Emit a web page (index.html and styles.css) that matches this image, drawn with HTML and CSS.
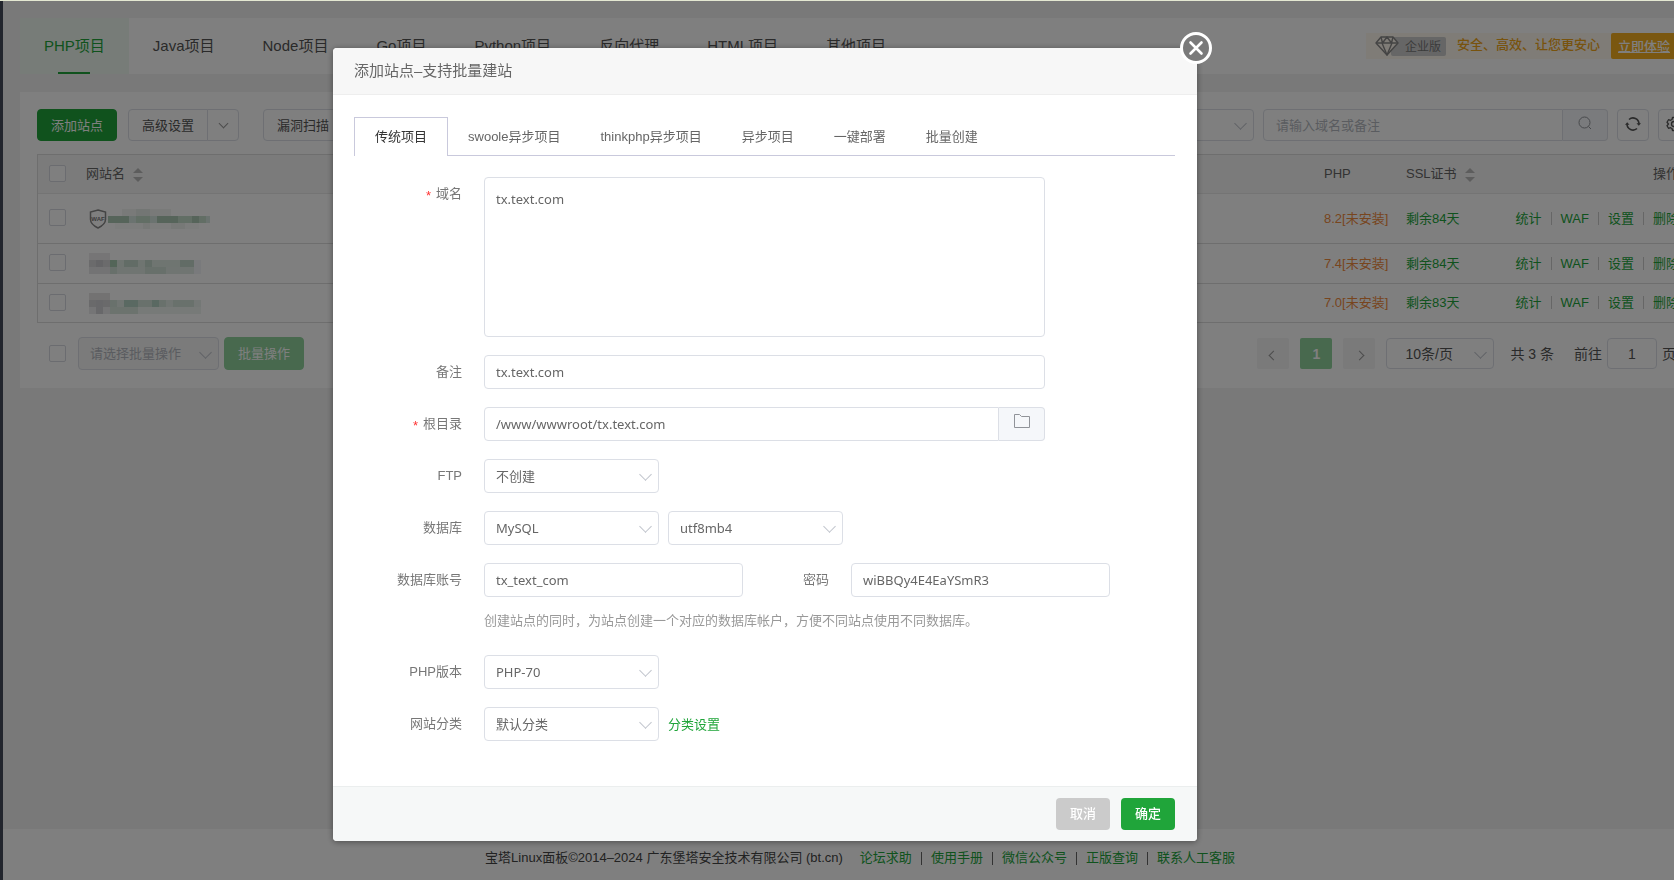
FILE: index.html
```html
<!DOCTYPE html>
<html lang="zh-CN">
<head>
<meta charset="utf-8">
<title>添加站点</title>
<link rel="stylesheet" href="styles.css">
</head>
<body>
<div class="app">
  <aside class="side"></aside>
  <div class="content">
    <main class="main">
      <nav class="card project-nav">
        <a class="project is-active" href="#">PHP项目</a>
        <a class="project" href="#">Java项目</a>
        <a class="project" href="#">Node项目</a>
        <a class="project" href="#">Go项目</a>
        <a class="project" href="#">Python项目</a>
        <a class="project" href="#">反向代理</a>
        <a class="project" href="#">HTML项目</a>
        <a class="project" href="#">其他项目</a>
        <div class="promo">
          <svg class="promo-gem" width="24" height="20" viewBox="0 0 24 20" fill="none" stroke="currentColor" stroke-width="1.4" stroke-linejoin="round"><path d="M6 1h12l5 6-11 12L1 7z" fill="#fff8ee"/><path d="M1 7h22M7 7l5 12 5-12M6 1l1.500 6L12 1l4.500 6L18 1"/></svg>
          <span class="promo-badge">企业版</span>
          <span class="promo-text">安全、高效、让您更安心</span>
          <button class="promo-btn" type="button">立即体验</button>
        </div>
      </nav>

      <section class="card sites">
        <div class="toolbar">
          <button class="btn btn-primary" type="button">添加站点</button>
          <div class="split">
            <button class="btn split-main" type="button">高级设置</button>
            <button class="btn split-more" type="button" aria-label="更多"><i class="chev"></i></button>
          </div>
          <button class="btn scan" type="button">漏洞扫描</button>
          <div class="toolbar-right">
            <div class="select filter"><select aria-label="分类"><option></option></select></div>
            <div class="search">
              <input type="text" placeholder="请输入域名或备注" aria-label="搜索">
              <button type="button" aria-label="搜索"><svg width="14" height="14" viewBox="0 0 14 14" fill="none" stroke="currentColor"><circle cx="6.500" cy="6.500" r="5.500"/><path d="M10.500 10.500l2.500 2.500"/></svg></button>
            </div>
            <button class="btn icon-btn" type="button" aria-label="刷新"><svg width="16" height="16" viewBox="0 0 16 16" fill="none" stroke="currentColor" stroke-width="1.600"><path d="M4 3.500A6 6 0 0 1 14 8M12 12.500A6 6 0 0 1 2 8"/><path d="M11.500 7.200h4.500l-2.200 2.600zM0 8.800h4.500L2.200 6.200z" fill="currentColor" stroke="none"/></svg></button>
            <button class="btn icon-btn" type="button" aria-label="设置"><svg width="16" height="16" viewBox="0 0 16 16" fill="none" stroke="currentColor" stroke-width="1.300"><path d="M6.500 1.500h3l.500 2 1.500.800 2-.600 1.500 2.600-1.500 1.700 1.500 1.700-1.500 2.600-2-.600-1.500.800-.500 2h-3l-.500-2-1.500-.800-2 .600L1 9.700 2.500 8 1 6.300l1.500-2.600 2 .600L6 3.500z" stroke-linejoin="round"/><circle cx="8" cy="8" r="2.500"/></svg></button>
          </div>
        </div>

        <table class="table">
          <colgroup><col class="c-check"><col><col class="c-php"><col class="c-ssl"><col class="c-ops"></colgroup>
          <thead>
            <tr>
              <th class="check"><input type="checkbox" aria-label="全选"></th>
              <th>网站名<i class="sort"></i></th>
              <th>PHP</th>
              <th>SSL证书<i class="sort"></i></th>
              <th class="ops">操作</th>
            </tr>
          </thead>
          <tbody>
            <tr class="row-tall">
              <td class="check"><input type="checkbox" aria-label="选择站点 1"></td>
              <td><div class="site">
                <svg width="18" height="20" viewBox="0 0 18 20"><path d="M9 1l7.500 2v7.500c0 4-3.500 6.500-7.500 8.500-4-2-7.500-4.500-7.500-8.500V3z" fill="none" stroke="#888" stroke-width="1.500"/><text x="9" y="11.500" font-size="6" font-weight="700" text-anchor="middle" fill="#777" font-family="Liberation Sans, sans-serif">WAF</text></svg>
                <svg class="mosaic" width="102" height="20" viewBox="0 0 102 20"><path d="M14 0h49v7H14z" fill="#f2f4f2"/><path d="M28 0h14v7H28z" fill="#e6ece8"/><path d="M0 7h102v7H0z" fill="#c4dccb"/><path d="M0 7h21v7H0zM49 7h21v7H49zM84 7h7v7h-7z" fill="#adc9b4"/><path d="M21 7h7v7h-7zM42 7h7v7h-7zM98 7h4v7h-4z" fill="#d6e6e0"/><path d="M7 14h84v6H7z" fill="#f8faf8"/><path d="M35 14h7v6h-7zM63 14h14v6H63z" fill="#eef3ef"/></svg>
              </div></td>
              <td><a class="warn" href="#">8.2[未安装]</a></td>
              <td><a class="ok" href="#">剩余84天</a></td>
              <td class="ops"><span class="actions"><a href="#">统计</a><a href="#">WAF</a><a href="#">设置</a><a href="#">删除</a></span></td>
            </tr>
            <tr>
              <td class="check"><input type="checkbox" aria-label="选择站点 2"></td>
              <td><div class="site">
                <svg class="mosaic" width="112" height="21" viewBox="0 0 112 21"><path d="M0 0h21v7H0z" fill="#ecebec"/><path d="M0 7h21v7H0z" fill="#d6d6d8"/><path d="M0 14h21v7H0z" fill="#e6e6e8"/><path d="M7 7h7v7H7z" fill="#cbcbce"/><path d="M21 7h7v7h-7z" fill="#a6cbb0"/><path d="M28 7h77v7H28z" fill="#dfeae3"/><path d="M35 7h14v7H35zM56 7h7v7h-7zM91 7h14v7H91z" fill="#c5d8cc"/><path d="M21 14h84v7H21z" fill="#e0ebe4"/><path d="M21 14h7v7h-7zM56 14h21v7H56z" fill="#d0e0d6"/><path d="M105 7h7v14h-7z" fill="#f2f5f8"/></svg>
              </div></td>
              <td><a class="warn" href="#">7.4[未安装]</a></td>
              <td><a class="ok" href="#">剩余84天</a></td>
              <td class="ops"><span class="actions"><a href="#">统计</a><a href="#">WAF</a><a href="#">设置</a><a href="#">删除</a></span></td>
            </tr>
            <tr class="row-last">
              <td class="check"><input type="checkbox" aria-label="选择站点 3"></td>
              <td><div class="site">
                <svg class="mosaic" width="112" height="21" viewBox="0 0 112 21"><path d="M0 0h21v7H0z" fill="#e6e4e4"/><path d="M0 7h21v7H0z" fill="#d4d4d6"/><path d="M0 14h21v7H0z" fill="#ebebed"/><path d="M7 7h7v14H7z" fill="#d0d0d5"/><path d="M21 7h84v7H21z" fill="#d3e2d8"/><path d="M35 7h14v7H35zM63 7h7v7h-7z" fill="#b5d3c5"/><path d="M28 7h7v7h-7zM77 7h7v7h-7z" fill="#e2ece6"/><path d="M21 14h28v7H21z" fill="#d8e6dd"/><path d="M49 14h63v7H49z" fill="#eff4f1"/><path d="M105 7h7v7h-7z" fill="#e9f1ec"/></svg>
              </div></td>
              <td><a class="warn" href="#">7.0[未安装]</a></td>
              <td><a class="ok" href="#">剩余83天</a></td>
              <td class="ops"><span class="actions"><a href="#">统计</a><a href="#">WAF</a><a href="#">设置</a><a href="#">删除</a></span></td>
            </tr>
          </tbody>
        </table>

        <div class="table-foot">
          <input type="checkbox" aria-label="全选">
          <div class="select batch"><select aria-label="批量操作" disabled><option>请选择批量操作</option></select></div>
          <button class="btn btn-primary is-off" type="button">批量操作</button>
          <div class="pager">
            <button class="page" type="button" aria-label="上一页"><i class="chev chev-left"></i></button>
            <button class="page is-current" type="button">1</button>
            <button class="page" type="button" aria-label="下一页"><i class="chev chev-right"></i></button>
            <div class="select page-size"><select aria-label="每页条数"><option>10条/页</option></select></div>
            <span class="total">共 3 条</span>
            <label class="jump">前往<input type="text" value="1">页</label>
          </div>
        </div>
      </section>
    </main>
    <footer class="footer">
      <span class="copy">宝塔Linux面板©2014–2024 广东堡塔安全技术有限公司 (bt.cn)</span>
      <a href="#">论坛求助</a><i></i><a href="#">使用手册</a><i></i><a href="#">微信公众号</a><i></i><a href="#">正版查询</a><i></i><a href="#">联系人工客服</a>
    </footer>
  </div>
</div>

<div class="overlay">
  <div class="modal" role="dialog" aria-labelledby="dlg-title">
    <button class="close" type="button" aria-label="关闭"><svg width="32" height="32" viewBox="0 0 32 32" fill="none" stroke="#fff"><circle cx="16" cy="16" r="14.500" fill="#7a7a7a" stroke-width="3"/><path d="M10.500 10.500l11 11M21.500 10.500l-11 11" stroke-width="2.600" stroke-linecap="round"/></svg></button>
    <header class="modal-head" id="dlg-title">添加站点–支持批量建站</header>
    <div class="modal-body">
      <div class="tabs" role="tablist">
        <button class="tab is-active" type="button" role="tab">传统项目</button>
        <button class="tab" type="button" role="tab">swoole异步项目</button>
        <button class="tab" type="button" role="tab">thinkphp异步项目</button>
        <button class="tab" type="button" role="tab">异步项目</button>
        <button class="tab" type="button" role="tab">一键部署</button>
        <button class="tab" type="button" role="tab">批量创建</button>
      </div>
      <form class="form">
        <div class="row">
          <label class="label is-required" for="domain">域名</label>
          <textarea class="field wide" id="domain">tx.text.com</textarea>
        </div>
        <div class="row">
          <label class="label" for="note">备注</label>
          <input class="field wide" id="note" type="text" value="tx.text.com">
        </div>
        <div class="row">
          <label class="label is-required" for="root">根目录</label>
          <div class="group wide">
            <input class="field" id="root" type="text" value="/www/wwwroot/tx.text.com">
            <button type="button" aria-label="选择目录"><svg width="16" height="14" viewBox="0 0 16 14" fill="none" stroke="currentColor"><path d="M.500.500h5l2 2h8v11H.500z"/></svg></button>
          </div>
        </div>
        <div class="row">
          <label class="label" for="ftp">FTP</label>
          <div class="select narrow"><select class="field" id="ftp"><option>不创建</option></select></div>
        </div>
        <div class="row">
          <label class="label" for="db">数据库</label>
          <div class="inline">
            <div class="select narrow"><select class="field" id="db"><option>MySQL</option></select></div>
            <div class="select narrow"><select class="field" aria-label="字符集"><option>utf8mb4</option></select></div>
          </div>
        </div>
        <div class="row">
          <label class="label" for="dbuser">数据库账号</label>
          <div class="account">
            <input class="field half" id="dbuser" type="text" value="tx_text_com">
            <label class="label" for="dbpass">密码</label>
            <input class="field half" id="dbpass" type="text" value="wiBBQy4E4EaYSmR3">
          </div>
          <p class="help">创建站点的同时，为站点创建一个对应的数据库帐户，方便不同站点使用不同数据库。</p>
        </div>
        <div class="row">
          <label class="label" for="php">PHP版本</label>
          <div class="select narrow"><select class="field" id="php"><option>PHP-70</option></select></div>
        </div>
        <div class="row">
          <label class="label" for="cat">网站分类</label>
          <div class="inline">
            <div class="select narrow"><select class="field" id="cat"><option>默认分类</option></select></div>
            <a class="link" href="#">分类设置</a>
          </div>
        </div>
      </form>
    </div>
    <footer class="modal-foot">
      <button class="action cancel" type="button">取消</button>
      <button class="action confirm" type="button">确定</button>
    </footer>
  </div>
</div>
</body>
</html>
```
FILE: styles.css
```css
* { box-sizing: border-box; }

body {
  margin: 0;
  background: #f2f2f2;
  color: #666;
  font: 13px/20px "Liberation Sans", "Noto Sans CJK SC", sans-serif;
}

button, input, select, textarea { font: inherit; color: inherit; margin: 0; }
button { cursor: pointer; }
a { color: #20a53a; text-decoration: none; }

/* Page behind the dialog */
.app {
  display: flex;
  isolation: isolate;
  height: 100vh;
  overflow: hidden;
  border-top: 1px solid #e4e8d2;
}
.side { flex: none; width: 3px; background: #444b5a; }
.content { flex: 1; min-width: 0; display: flex; flex-direction: column; }
.main { flex: 1; margin-right: -50px; padding: 17px; }
.card { background: #fff; }

.project-nav { display: flex; height: 56px; margin-bottom: 18px; }
.project {
  position: relative;
  padding: 0 24px;
  color: #555;
  font-size: 15px;
  line-height: 56px;
}
.project.is-active { background: #eef8f0; color: #20a53a; }
.project.is-active::after {
  content: "";
  position: absolute;
  left: 50%;
  bottom: 0;
  width: 32px;
  height: 2px;
  margin-left: -16px;
  background: #20a53a;
}

.promo {
  display: flex;
  align-items: center;
  height: 26px;
  margin: 15px 18px 0 auto;
  padding-left: 9px;
  background: #fff8ee;
  color: #f0a61a;
}
.promo-gem { z-index: 1; color: #888; }
.promo-badge {
  height: 19px;
  margin: 0 11px 0 -8px;
  padding: 0 5px 0 14px;
  border-radius: 2px;
  background: #ccc;
  color: #777;
  font-size: 12px;
  line-height: 20px;
}
.promo-text { margin: 0 11px 2px 0; font-weight: 500; }
.promo-btn {
  width: 78px;
  height: 26px;
  padding: 2px 7px 0;
  border: 0;
  border-radius: 2px;
  background: #f4ae20;
  color: #fff;
  font-weight: 500;
  text-align: left;
  text-decoration: underline;
}

.sites { padding: 17px 17px 18px; }
.toolbar { display: flex; height: 32px; margin-bottom: 13px; }
.btn {
  height: 32px;
  padding: 1px 13px 0;
  border: 1px solid #dcdfe6;
  border-radius: 4px;
  background: #fff;
  color: #555;
}
.btn-primary { border-color: #20a53a; background: #20a53a; color: #fff; }
.btn-primary.is-off { height: 33px; border-color: #90d29d; background: #90d29d; }
.split { display: flex; margin: 0 24px 0 11px; }
.split-main { border-radius: 4px 0 0 4px; }
.split-more { width: 32px; margin-left: -1px; padding: 0 0 4px; border-radius: 0 4px 4px 0; }
.toolbar-right { display: flex; gap: 9px; margin-left: auto; }
.filter { width: 160px; height: 32px; }
.search { display: flex; width: 345px; }
.search input {
  flex: 1;
  min-width: 0;
  padding: 2px 12px 0;
  border: 1px solid #dcdfe6;
  border-radius: 4px 0 0 4px;
  background: #fff;
}
.search input::placeholder { color: #b4b8c0; }
.search button {
  width: 45px;
  padding: 2px 0 0;
  border: 1px solid #dcdfe6;
  border-left: 0;
  border-radius: 0 4px 4px 0;
  background: #f5f7fa;
  color: #909399;
}
.icon-btn { width: 32px; padding: 4px 0 0; }

.chev {
  display: inline-block;
  width: 7px;
  height: 7px;
  border: solid #999;
  border-width: 0 1px 1px 0;
  transform: rotate(45deg);
}
.chev-left { transform: rotate(135deg); }
.chev-right { transform: rotate(-45deg); }

.select { position: relative; flex: none; }
.select::after {
  content: "";
  position: absolute;
  top: 50%;
  right: 9px;
  width: 8px;
  height: 8px;
  margin-top: -6px;
  border: solid #c0c4cc;
  border-width: 0 1px 1px 0;
  transform: rotate(45deg);
  pointer-events: none;
}
.select select {
  width: 100%;
  height: 100%;
  padding: 0 11px;
  border: 1px solid #dcdfe6;
  border-radius: 4px;
  background: #fff;
  appearance: none;
}

input[type="checkbox"] {
  display: block;
  width: 17px;
  height: 17px;
  border: 1px solid #d6d9e0;
  border-radius: 2px;
  background: #fff;
  appearance: none;
}

.table {
  width: 100%;
  border: 1px solid #dcdcdc;
  border-bottom: 0;
  border-spacing: 0;
  table-layout: fixed;
  white-space: nowrap;
}
.c-check { width: 38px; }
.c-php { width: 82px; }
.c-ssl { width: 102px; }
.c-ops { width: 191px; }
.table th {
  height: 39px;
  padding: 0 10px;
  border-bottom: 1px solid #e8e8e8;
  background: #f6f6f6;
  font-weight: 400;
  text-align: left;
}
.table td { height: 40px; padding: 0 10px; border-bottom: 1px solid #dcdcdc; }
.table .row-tall td { height: 50px; }
.table .row-last td { height: 39px; }
.table .check { padding: 0 0 2px 11px; }
.table .ops { text-align: right; }
.warn { color: #f08a3c; }
.site { display: flex; align-items: center; gap: 1px; padding-left: 3px; }
.sort {
  display: inline-grid;
  gap: 4px;
  margin-left: 8px;
  vertical-align: middle;
}
.sort::before, .sort::after {
  content: "";
  border: 5px solid transparent;
  border-top: 0;
  border-bottom-color: #bbb;
}
.sort::after { border-top: 5px solid #bbb; border-bottom: 0; }
.actions { display: inline-flex; }
.actions a + a::before {
  content: "";
  display: inline-block;
  width: 1px;
  height: 13px;
  margin: 0 9px;
  background: #ccc;
  vertical-align: -2px;
}

.table-foot {
  display: flex;
  align-items: center;
  margin-top: 14px;
  padding: 0 14px 0 12px;
}
.batch { width: 141px; height: 33px; margin: 0 5px 0 12px; }
.batch select { background: #f6f6f6; color: #b4b8c0; opacity: 1; }
.pager {
  display: flex;
  align-items: center;
  gap: 11px;
  margin-left: auto;
  color: #555;
  font-size: 14px;
}
.page {
  width: 32px;
  height: 31px;
  padding: 0;
  border: 0;
  border-radius: 2px;
  background: #f4f4f5;
}
.page.is-current { background: #90d29d; color: #fff; font-weight: 700; }
.page-size { width: 108px; height: 31px; }
.page-size select { padding-left: 18px; }
.total { margin: 0 9px 0 5px; }
.jump { display: flex; align-items: center; gap: 5px; }
.jump input {
  width: 50px;
  height: 31px;
  padding: 0;
  border: 1px solid #dcdfe6;
  border-radius: 4px;
  background: #fff;
  text-align: center;
}

.footer {
  display: flex;
  align-items: center;
  justify-content: center;
  height: 51px;
  margin-right: -43px;
  padding-top: 7px;
  background: #fff;
}
.copy { margin-right: 17px; color: #444; }
.footer i { width: 1px; height: 13px; margin: 0 9px; background: #666; }

/* Dialog */
.overlay {
  position: fixed;
  inset: 1px 0 0;
  display: flex;
  align-items: flex-start;
  justify-content: center;
  padding: 47px 144px 0 0;
  background: rgba(0, 0, 0, .5);
}
.modal {
  position: relative;
  width: 864px;
  border-radius: 4px;
  background: #fff;
  box-shadow: 0 1px 6px rgba(0, 0, 0, .4);
}
.close {
  position: absolute;
  top: -16px;
  right: -15px;
  width: 32px;
  height: 32px;
  padding: 0;
  border: 0;
  background: none;
}
.close svg { display: block; }
.modal-head {
  height: 47px;
  padding: 0 21px;
  border-bottom: 1px solid #eee;
  border-radius: 4px 4px 0 0;
  background: #f7f7f7;
  font-size: 15px;
  line-height: 46px;
}
.modal-body { padding: 22px 22px 45px 21px; }
.tabs { display: flex; height: 39px; border-bottom: 1px solid #c9c9dc; }
.tab {
  height: 38px;
  padding: 2px 20px 0;
  border: 0;
  background: none;
}
.tab.is-active {
  height: 39px;
  padding-top: 0;
  border: solid #c9c9dc;
  border-width: 1px 1px 0;
  background: #fff;
  color: #333;
}

.form { display: grid; gap: 18px; padding-top: 21px; }
.row { display: grid; grid-template-columns: 108px 1fr; column-gap: 22px; }
.label { line-height: 34px; color: #777; text-align: right; }
.is-required::before {
  content: "*";
  margin-right: 5px;
  color: #f33;
  line-height: 1;
  vertical-align: -2px;
}
.field {
  height: 34px;
  padding: 0 11px;
  border: 1px solid #dcdfe6;
  border-radius: 4px;
  background: #fff;
  font-family: "Noto Sans", "Noto Sans CJK SC", sans-serif;
}
.wide { width: 561px; }
.narrow { width: 175px; height: 34px; }
.half { width: 259px; }
textarea.field { height: 160px; padding: 11px; resize: none; }
.group { display: flex; }
.group .field { flex: 1; border-radius: 4px 0 0 4px; }
.group button {
  width: 46px;
  padding: 0;
  border: 1px solid #dcdfe6;
  border-left: 0;
  border-radius: 0 4px 4px 0;
  background: #f5f7fa;
  color: #909399;
}
.inline { display: flex; align-items: center; gap: 9px; }
.account { display: flex; gap: 22px; }
.account .label { width: 64px; }
.help { grid-column: 2; margin: 14px 0 6px; color: #999; }
.link { padding-top: 2px; }

.modal-foot {
  display: flex;
  justify-content: flex-end;
  gap: 11px;
  padding: 11px 22px;
  border-top: 1px solid #ebeeee;
  border-radius: 0 0 4px 4px;
  background: #f6f8f8;
}
.action {
  width: 54px;
  height: 32px;
  padding: 0;
  border: 0;
  border-radius: 4px;
  color: #fff;
  font-weight: 500;
}
.cancel { background: #cbcbcb; }
.confirm { background: #20a53a; }
```
